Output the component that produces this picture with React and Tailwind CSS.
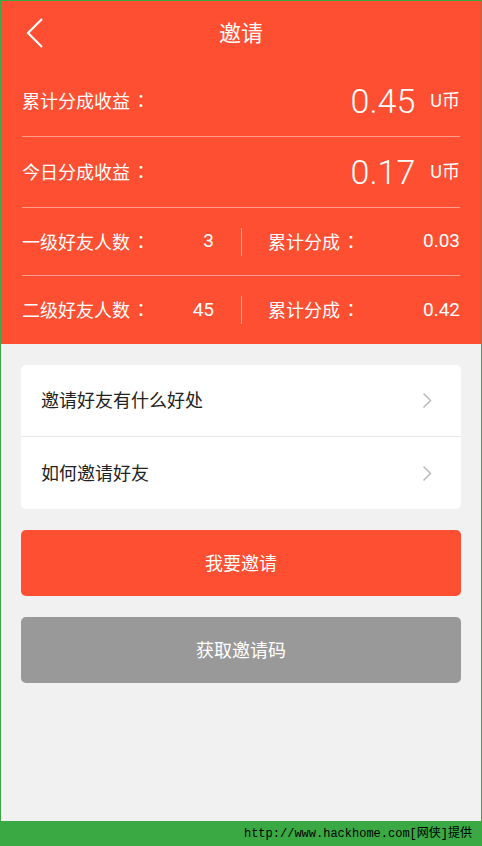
import React from "react";

const cjk = { fontFamily: 'Roboto, "Noto Sans CJK SC", sans-serif' };

function Colon() {
  return <span style={{ fontFamily: '"Noto Sans CJK TC", sans-serif' }} className="ml-[2px]">：</span>;
}

function BigRow({ label, value, border }) {
  return (
    <div className={`flex h-[71px] items-center justify-between ${border ? "border-b border-[rgba(255,255,255,0.45)]" : ""}`}>
      <span className="text-[18px] text-white">{label}<Colon /></span>
      <div className="flex items-center">
        <span className="text-[34px] font-light leading-none text-white" style={{ fontFamily: "Roboto, sans-serif" }}>{value}</span>
        <span className="ml-[15px] text-[18px] leading-none text-white">U币</span>
      </div>
    </div>
  );
}

function StatRow({ label, value, sum, border }) {
  return (
    <div className={`flex h-[68px] items-center ${border ? "border-b border-[rgba(255,255,255,0.45)]" : ""}`}>
      <div className="flex flex-1 items-center justify-between pr-[27px]">
        <span className="text-[18px] text-white">{label}<Colon /></span>
        <span className="text-[19px] text-white">{value}</span>
      </div>
      <div className="h-[28px] w-px bg-[rgba(255,255,255,0.45)]" />
      <div className="flex flex-1 items-center justify-between pl-[26px]">
        <span className="text-[18px] text-white">累计分成<Colon /></span>
        <span className="text-[19px] text-white">{sum}</span>
      </div>
    </div>
  );
}

function Chevron() {
  return (
    <svg width="10" height="17" viewBox="0 0 10 17" fill="none">
      <path d="M1.5 1.5 L8.5 8.5 L1.5 15.5" stroke="#bdbdbd" strokeWidth="1.6" />
    </svg>
  );
}

export default function App() {
  return (
    <div className="flex h-[846px] w-[482px] flex-col bg-[#3aa944]" style={cjk}>
      <div className="mx-px mt-px flex flex-1 flex-col bg-[#f1f1f1]">
        <div className="bg-[#fe4f32] px-[21px]">
          <div className="relative flex h-[65px] items-center justify-center">
            <svg className="absolute left-[4px] top-[16px]" width="18" height="32" viewBox="0 0 18 32" fill="none">
              <path d="M16 2 L2 16 L16 30" stroke="white" strokeWidth="2.2" />
            </svg>
            <span className="text-[22px] text-white">邀请</span>
          </div>
          <BigRow label="累计分成收益" value="0.45" border />
          <BigRow label="今日分成收益" value="0.17" border />
          <StatRow label="一级好友人数" value="3" sum="0.03" border />
          <StatRow label="二级好友人数" value="45" sum="0.42" />
        </div>
        <div className="flex flex-col gap-[21px] px-[20px] pt-[21px]">
          <div className="rounded-[5px] bg-white">
            <div className="flex h-[72px] items-center justify-between border-b border-[#e6e6e6] pl-[20px] pr-[29px]">
              <span className="text-[18px] text-[#222]">邀请好友有什么好处</span>
              <Chevron />
            </div>
            <div className="flex h-[72px] items-center justify-between pl-[20px] pr-[29px]">
              <span className="text-[18px] text-[#222]">如何邀请好友</span>
              <Chevron />
            </div>
          </div>
          <div className="flex h-[66px] items-center justify-center rounded-[5px] bg-[#fe4f32] text-[18px] text-white">我要邀请</div>
          <div className="flex h-[66px] items-center justify-center rounded-[5px] bg-[#999999] text-[18px] text-white">获取邀请码</div>
        </div>
      </div>
      <div className="flex h-[25px] items-center justify-end pr-[10px] text-[12px] text-black" style={{ fontFamily: '"Liberation Mono", "Noto Sans CJK SC", monospace' }}>
        http://www.hackhome.com[网侠]提供
      </div>
    </div>
  );
}
